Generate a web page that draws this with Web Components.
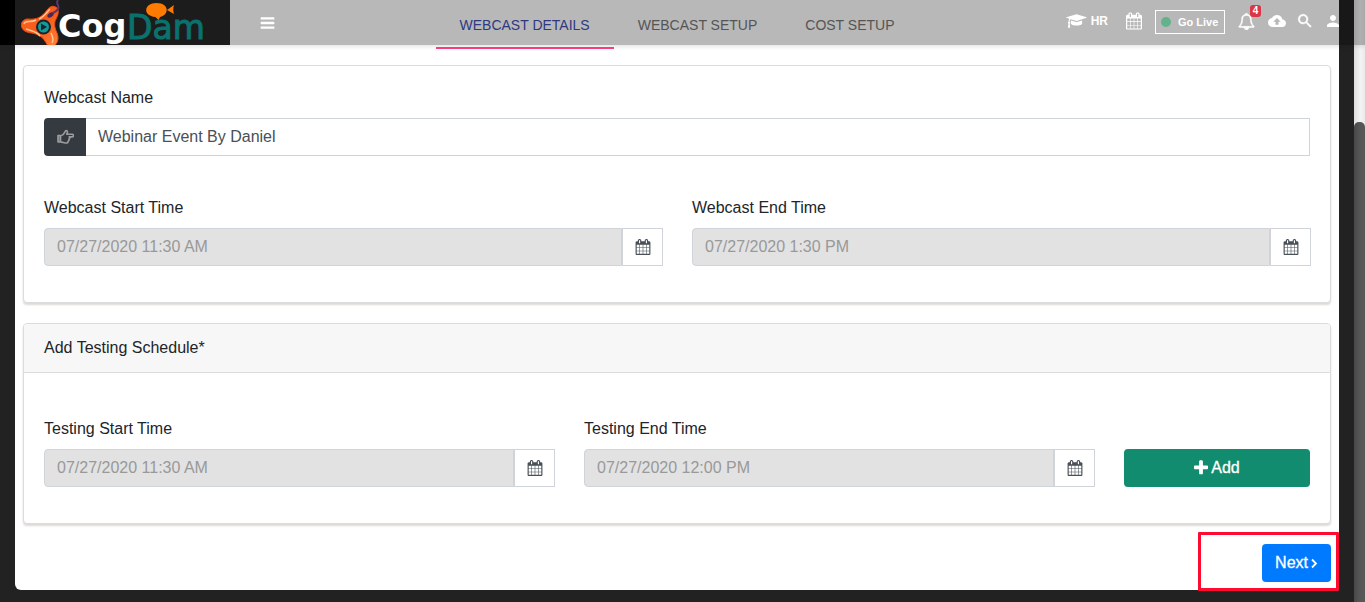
<!DOCTYPE html>
<html lang="en">
<head>
<meta charset="utf-8">
<title>CogDam - Webcast Details</title>
<style>
  body { margin: 0; background: #222; font: 16px/24px "Liberation Sans", Arial, sans-serif; color: #212529; }
</style>
</head>
<body>
<webcast-page></webcast-page>

<script>
const ICONS = {
  bars: ['0 0 1536 1792', '<path d="M1536 1344v128q0 26-19 45t-45 19H64q-26 0-45-19t-19-45v-128q0-26 19-45t45-19h1408q26 0 45 19t19 45zm0-512v128q0 26-19 45t-45 19H64q-26 0-45-19t-19-45V832q0-26 19-45t45-19h1408q26 0 45 19t19 45zm0-512v128q0 26-19 45t-45 19H64q-26 0-45-19t-19-45V320q0-26 19-45t45-19h1408q26 0 45 19t19 45z"/>'],
  calendar: ['64 0 1664 1792', '<path d="M192 1664h288v-288h-288v288zm352 0h320v-288h-320v288zm-352-352h288v-320h-288v320zm352 0h320v-320h-320v320zm-352-384h288v-288h-288v288zm736 736h320v-288h-320v288zm-384-736h320v-288h-320v288zm768 736h288v-288h-288v288zm-384-352h320v-320h-320v320zm-352-864v-288q0-13-9.500-22.500t-22.500-9.500h-64q-13 0-22.500 9.500t-9.500 22.500v288q0 13 9.500 22.500t22.500 9.500h64q13 0 22.500-9.500t9.500-22.500zm736 864h288v-320h-288v320zm-384-384h320v-288h-320v288zm384 0h288v-288h-288v288zm32-480v-288q0-13-9.500-22.500t-22.500-9.500h-64q-13 0-22.500 9.500t-9.500 22.500v288q0 13 9.500 22.500t22.500 9.500h64q13 0 22.500-9.500t9.500-22.500zm384-64v1280q0 52-38 90t-90 38h-1408q-52 0-90-38t-38-90v-1280q0-52 38-90t90-38h128v-96q0-66 47-113t113-47h64q66 0 113 47t47 113v96h384v-96q0-66 47-113t113-47h64q66 0 113 47t47 113v96h128q52 0 90 38t38 90z"/>'],
  cap: ['0 0 2304 1792', '<path d="M1774 836l18 316q4 69-82 128t-235 93.500-323 34.500-323-34.500-235-93.500-82-128l18-316 574 181q22 7 48 7t48-7zm530-324q0 23-22 31l-1120 352q-4 1-10 1t-10-1l-652-206q-43 34-71 111.500t-34 178.500q63 36 63 109 0 69-58 107l58 433q2 14-8 25-9 11-24 11h-192q-15 0-24-11-10-11-8-25l58-433q-58-38-58-107 0-73 65-111 11-207 98-330l-333-104q-22-8-22-31t22-31l1120-352q4-1 10-1t10 1l1120 352q22 8 22 31z"/>'],
  plus: ['192 0 1408 1792', '<path d="M1600 736v192q0 40-28 68t-68 28h-416v416q0 40-28 68t-68 28h-192q-40 0-68-28t-28-68v-416h-416q-40 0-68-28t-28-68v-192q0-40 28-68t68-28h416v-416q0-40 28-68t68-28h192q40 0 68 28t28 68v416h416q40 0 68 28t28 68z"/>'],
  bell: ['0 0 1792 1792', '<path d="M912 1696q0-16-16-16-59 0-101.500-42.500t-42.500-101.500q0-16-16-16t-16 16q0 73 51.500 124.500t124.500 51.500q16 0 16-16zm-666-288h1300q-266-300-266-832 0-51-24-105t-69-103-121.500-80.500-169.500-31.500-169.500 31.500-121.500 80.500-69 103-24 105q0 532-266 832zm1482 0q0 52-38 90t-90 38h-448q0 106-75 181t-181 75-181-75-75-181h-448q-52 0-90-38t-38-90q50-42 91-88t85-119.500 74.500-158.500 50-206 19.500-260q0-152 117-282.500t307-158.500q-8-19-8-39 0-40 28-68t68-28 68 28 28 68q0 20-8 39 190 28 307 158.500t117 282.500q0 139 19.500 260t50 206 74.500 158.500 85 119.500 91 88z" stroke="currentColor" stroke-width="50"/>'],
  cloud: ['0 0 24 24', '<path d="M19.350 10.040C18.670 6.590 15.640 4 12 4 9.110 4 6.600 5.640 5.350 8.040 2.340 8.360 0 10.910 0 14c0 3.310 2.690 6 6 6h13c2.760 0 5-2.240 5-5 0-2.640-2.050-4.780-4.650-4.960zM14 13v4h-4v-4H7l5-5 5 5h-3z"/>'],
  search: ['0 0 24 24', '<path d="M15.500 14h-.79l-.28-.27C15.410 12.590 16 11.110 16 9.500 16 5.910 13.090 3 9.500 3S3 5.910 3 9.500 5.910 16 9.500 16c1.610 0 3.090-.59 4.230-1.570l.27.28v.79l5 4.990L20.490 19l-4.990-5zm-6 0C7.010 14 5 11.990 5 9.500S7.010 5 9.500 5 14 7.010 14 9.500 11.990 14 9.500 14z" stroke="currentColor" stroke-width=".6"/>'],
  person: ['0 0 24 24', '<path d="M12 12c2.210 0 4-1.790 4-4s-1.790-4-4-4-4 1.790-4 4 1.790 4 4 4zm0 2c-2.670 0-8 1.340-8 4v2h16v-2c0-2.660-5.330-4-8-4z"/>'],
  chevron: ['0 0 7 16', '<path d="M1 4.500L5 8.500 1 12.500" fill="none" stroke="currentColor" stroke-width="1.800"/>'],
  hand: ['0 0 17 16', '<g fill="none" stroke="currentColor" stroke-width="1.600" stroke-linejoin="round" stroke-linecap="round"><path d="M1 6.500h2.500v6.500H1z" fill="currentColor" fill-opacity=".5"/><path d="M4.500 6.500C6.500 6.200 7.300 3.800 8.200 2.300c.8-1.300 2.600-.6 2.200 1-.2.900-.5 1.300-.6 1.900H15c1.900 0 1.900 2.700 0 2.700h-2.800c1 .8.600 2.100-.4 2.300.5.900.1 1.900-.8 2.100.2 1.200-.5 1.700-1.800 1.700H8c-1.300 0-2-.8-3.500-.9"/></g>']
};

class AppIcon extends HTMLElement {
  connectedCallback() {
    const [box, body] = ICONS[this.getAttribute('name')];
    this.attachShadow({ mode: 'open' }).innerHTML = `
      <style>
        :host { display: block; flex: none; width: 16px; height: 16px; }
        svg { display: block; width: 100%; height: 100%; fill: currentColor; }
      </style>
      <svg viewBox="${box}" aria-hidden="true">${body}</svg>`;
  }
}
customElements.define('app-icon', AppIcon);

class BrandLogo extends HTMLElement {
  connectedCallback() {
    this.attachShadow({ mode: 'open' }).innerHTML = `
      <style>
        :host { display: block; width: 215px; height: 45px; background: #1c1c1c; border-left: 15px solid #000; }
        svg { display: block; width: 215px; height: 45px; overflow: visible; }
        text { font-family: "DejaVu Sans", sans-serif; }
      </style>
      <svg viewBox="0 0 215 45" role="img" aria-label="CogDam">
        <defs>
          <linearGradient id="arm" x1="0" y1="0" x2="1" y2="1">
            <stop offset="0" stop-color="#ff6a20"/><stop offset=".5" stop-color="#f75a1a"/><stop offset="1" stop-color="#ff8238"/>
          </linearGradient>
          <clipPath id="bar"><path d="M0 0h215v45H0z"/></clipPath>
        </defs>
        <g clip-path="url(#bar)">
          <path d="M32 10C35 6 39 5 42 8C45 12 42 17 40 21C39 25 40 29 42 33C44 38 43 43 39 46H33C30 41 28 37 23 35C18 32 10 34 7 28C5 23 8 19 13 19C22 20 27 17 32 10Z" fill="url(#arm)" stroke="#e84a16"/>
          <path d="M9 24C10 20 16 23 21 20M24 19C29 17 32 12 35 9M11 29C16 31 21 31 25 36M36 33C38 37 39 40 37 43" fill="none" stroke="#ffc593" stroke-width="1.500"/>
          <path d="M43 0c-3 4 2 5 0 9-1 2-3 3-5 4" fill="none" stroke="#5b3670" stroke-width="2"/>
          <ellipse cx="35.500" cy="15" rx="3.500" ry="2" transform="rotate(-35 35.500 15)" fill="#4b2458"/>
          <circle cx="28.500" cy="27" r="6.500" fill="#159a9c" stroke="#17242a" stroke-width="2"/>
          <path d="M26 23.500l6 3.500-6 3.500z" fill="#11252b"/>
        </g>
        <text x="43" y="37" font-size="32" font-weight="700" fill="#fff">Cog</text>
        <text x="112" y="39" font-size="33" fill="#0b716d" stroke="#0b716d">Dam</text>
        <path d="M141.500 3c13 0 13 12 3.500 14l-1.500 3-3-3c-13-1-12-14 1-14zM152 10l7-5c-1 3-1 6 0 9z" fill="#ff7a00"/>
      </svg>`;
  }
}
customElements.define('brand-logo', BrandLogo);

class AppHeader extends HTMLElement {
  connectedCallback() {
    this.attachShadow({ mode: 'open' }).innerHTML = `
      <style>
        :host { display: flex; height: 45px; background: rgba(0,0,0,.28); box-shadow: 0 2px 4px rgba(0,0,0,.1); color: #fff; }
        button, a { display: flex; align-items: center; border: 0; padding: 0; background: none; color: inherit; font: inherit; text-decoration: none; }
        .menu { margin-left: 30px; }
        .tools { display: flex; align-items: flex-start; margin-left: auto; padding: 10px 23px 0 0; font: 700 12px/24px "Liberation Sans", Arial, sans-serif; }
        .tools > * { height: 22px; }
        .hr { gap: 4px; margin-right: 18px; }
        .hr app-icon { width: 21px; height: 16px; }
        .cal { margin-right: 13px; }
        .cal app-icon { height: 18px; }
        .tools .live { box-sizing: border-box; width: 70px; height: 24px; gap: 7px; padding: 0 5px; border: 1px solid #fff; margin-right: 13px; white-space: nowrap; font-size: 11px; }
        .dot { flex: none; width: 10px; height: 10px; border-radius: 50%; background: #62b38c; }
        .bell { position: relative; margin-right: 13px; }
        .bell app-icon { width: 17px; height: 17px; }
        .badge { position: absolute; left: 12px; top: -5px; width: 11px; height: 12px; border-radius: 3px; background: #dc3545; font: 700 10px/12px "Liberation Sans", sans-serif; text-align: center; }
        .mat app-icon { width: 18px; height: 18px; }
        .mat + .mat { margin-left: 10px; }
      </style>
      <brand-logo></brand-logo>
      <button class="menu" aria-label="Menu"><app-icon name="bars" style="width:15px"></app-icon></button>
      <div class="tools">
        <a class="hr" href="#hr"><app-icon name="cap"></app-icon>HR</a>
        <a class="cal" href="#calendar" aria-label="Calendar"><app-icon name="calendar"></app-icon></a>
        <button class="live"><span class="dot"></span>Go Live</button>
        <button class="bell" aria-label="Notifications"><app-icon name="bell"></app-icon><span class="badge">4</span></button>
        <button class="mat" aria-label="Upload"><app-icon name="cloud"></app-icon></button>
        <button class="mat" aria-label="Search"><app-icon name="search"></app-icon></button>
        <button class="mat" aria-label="Account"><app-icon name="person"></app-icon></button>
      </div>`;
  }
}
customElements.define('app-header', AppHeader);

class StepTabs extends HTMLElement {
  connectedCallback() {
    this.attachShadow({ mode: 'open' }).innerHTML = `
      <style>
        :host { display: flex; justify-content: center; height: 49px; }
        button { box-sizing: border-box; padding: 2px 24px 0; border: 0; border-bottom: 2px solid transparent; background: none; color: #777; font: 14px/24px "Liberation Sans", sans-serif; text-transform: uppercase; }
        button[aria-selected=true] { color: #3f51b5; border-bottom-color: #ff4081; }
      </style>
      <button role="tab" aria-selected="true">WEBCAST DETAILS</button>
      <button role="tab" aria-selected="false">WEBCAST SETUP</button>
      <button role="tab" aria-selected="false">COST SETUP</button>`;
    this.setAttribute('role', 'tablist');
  }
}
customElements.define('step-tabs', StepTabs);

class FormCard extends HTMLElement {
  connectedCallback() {
    const heading = this.getAttribute('heading');
    this.attachShadow({ mode: 'open' }).innerHTML = `
      <style>
        :host { display: block; background: #fff; border: 1px solid #dcdcdc; border-radius: 4px; box-shadow: 0 2px 2px #dfdad6; }
        header { padding: 12px 20px; background: #f7f7f7; border-bottom: 1px solid #dcdcdc; border-radius: 3px 3px 0 0; }
        .body { display: grid; grid-template-columns: repeat(12, minmax(0, 1fr)); gap: 40px 30px; align-items: end; padding: ${heading ? 44 : 20}px 20px 36px; }
      </style>
      ${heading ? `<header>${heading}</header>` : ''}
      <div class="body"><slot></slot></div>`;
  }
}
customElements.define('form-card', FormCard);

const FIELD_CSS = `
  :host { display: block; grid-column: span var(--cols, 12); }
  label { display: block; margin-bottom: 8px; }
  .group { display: flex; height: 38px; }
  input { box-sizing: border-box; flex: 1; min-width: 0; margin: 0; padding: 0 12px; border: 1px solid #ced4da; background: #fff; color: #495057; font: 16px/24px "Liberation Sans", Arial, sans-serif; }
  .addon { box-sizing: border-box; display: flex; align-items: center; justify-content: center; padding: 0; }
`;

class TextField extends HTMLElement {
  connectedCallback() {
    this.attachShadow({ mode: 'open' }).innerHTML = `
      <style>${FIELD_CSS}
        .addon { width: 42px; border-radius: 4px 0 0 4px; background: #343a40; color: #9b9da0; }
        app-icon { width: 17px; }
        input { border-left: 0; }
      </style>
      <label for="f">${this.getAttribute('label')}</label>
      <div class="group"><span class="addon"><app-icon name="hand"></app-icon></span><input id="f" type="text" value="${this.getAttribute('value')}"></div>`;
  }
}
customElements.define('text-field', TextField);

class DateField extends HTMLElement {
  connectedCallback() {
    this.attachShadow({ mode: 'open' }).innerHTML = `
      <style>${FIELD_CSS}
        .group { margin-right: -1px; }
        input { border-radius: 4px 0 0 4px; background: #e2e2e2; color: #999; }
        .addon { width: 41px; border: 1px solid #ced4da; background: #fff; color: #495057; }
      </style>
      <label for="f">${this.getAttribute('label')}</label>
      <div class="group"><input id="f" type="text" readonly value="${this.getAttribute('value')}"><button class="addon" aria-label="Pick date"><app-icon name="calendar"></app-icon></button></div>`;
  }
}
customElements.define('date-field', DateField);

class ActionButton extends HTMLElement {
  connectedCallback() {
    this.attachShadow({ mode: 'open' }).innerHTML = `
      <style>
        :host { display: block; grid-column: span var(--cols, 2); }
        button { display: flex; align-items: center; justify-content: center; gap: 3px; width: 100%; height: 38px; padding: 0 13px; border: 0; border-radius: 4px; background: var(--fill); color: #fff; font: 16px/24px "Liberation Sans", Arial, sans-serif; -webkit-text-stroke: 0.3px #fff; }
      </style>
      <button><slot></slot></button>`;
  }
}
customElements.define('action-button', ActionButton);

class PageScrollbar extends HTMLElement {
  connectedCallback() {
    this.attachShadow({ mode: 'open' }).innerHTML = `
      <style>
        :host { display: block; width: 11px; padding-top: 122px; box-sizing: border-box; background: linear-gradient(90deg, #dedede, #f4f4f4 60%, #eaeaea); }
        div { box-sizing: border-box; height: 100%; border-radius: 5px 5px 0 0; background: linear-gradient(90deg, #484848, #555 50%, #595959); }
      </style>
      <div></div>`;
  }
}
customElements.define('page-scrollbar', PageScrollbar);

class WebcastPage extends HTMLElement {
  connectedCallback() {
    this.attachShadow({ mode: 'open' }).innerHTML = `
      <style>
        :host { display: grid; grid-template-columns: minmax(0, 1fr) 11px; min-height: 100vh; position: relative; }
        app-header { position: absolute; top: 0; left: 0; right: 0; z-index: 1; }
        .outer { padding: 0 15px 12px; }
        main { background: #fff; border-radius: 0 0 6px 6px; padding: 0 8px 8px; }
        form-card { margin-bottom: 20px; }
        step-tabs { margin-bottom: 16px; }
        .foot { display: flex; justify-content: flex-end; position: relative; }
        .focus { position: absolute; top: -12px; right: -8px; width: 141px; height: 59px; box-sizing: border-box; border: 3px solid #ff0a30; border-radius: 1px; pointer-events: none; }
      </style>
      <app-header></app-header>
      <div class="outer">
        <main>
          <step-tabs></step-tabs>
          <form-card>
            <text-field label="Webcast Name" value="Webinar Event By Daniel"></text-field>
            <date-field style="--cols:6" label="Webcast Start Time" value="07/27/2020 11:30 AM"></date-field>
            <date-field style="--cols:6" label="Webcast End Time" value="07/27/2020 1:30 PM"></date-field>
          </form-card>
          <form-card heading="Add Testing Schedule*">
            <date-field style="--cols:5" label="Testing Start Time" value="07/27/2020 11:30 AM"></date-field>
            <date-field style="--cols:5" label="Testing End Time" value="07/27/2020 12:00 PM"></date-field>
            <action-button style="--cols:2; --fill:#128c6e"><app-icon name="plus" style="width:14px;height:18px"></app-icon>Add</action-button>
          </form-card>
          <div class="foot">
            <action-button style="--fill:#007bff">Next<app-icon name="chevron" style="width:7px"></app-icon></action-button>
            <div class="focus"></div>
          </div>
        </main>
      </div>
      <page-scrollbar></page-scrollbar>`;
  }
}
customElements.define('webcast-page', WebcastPage);
</script>
</body>
</html>
